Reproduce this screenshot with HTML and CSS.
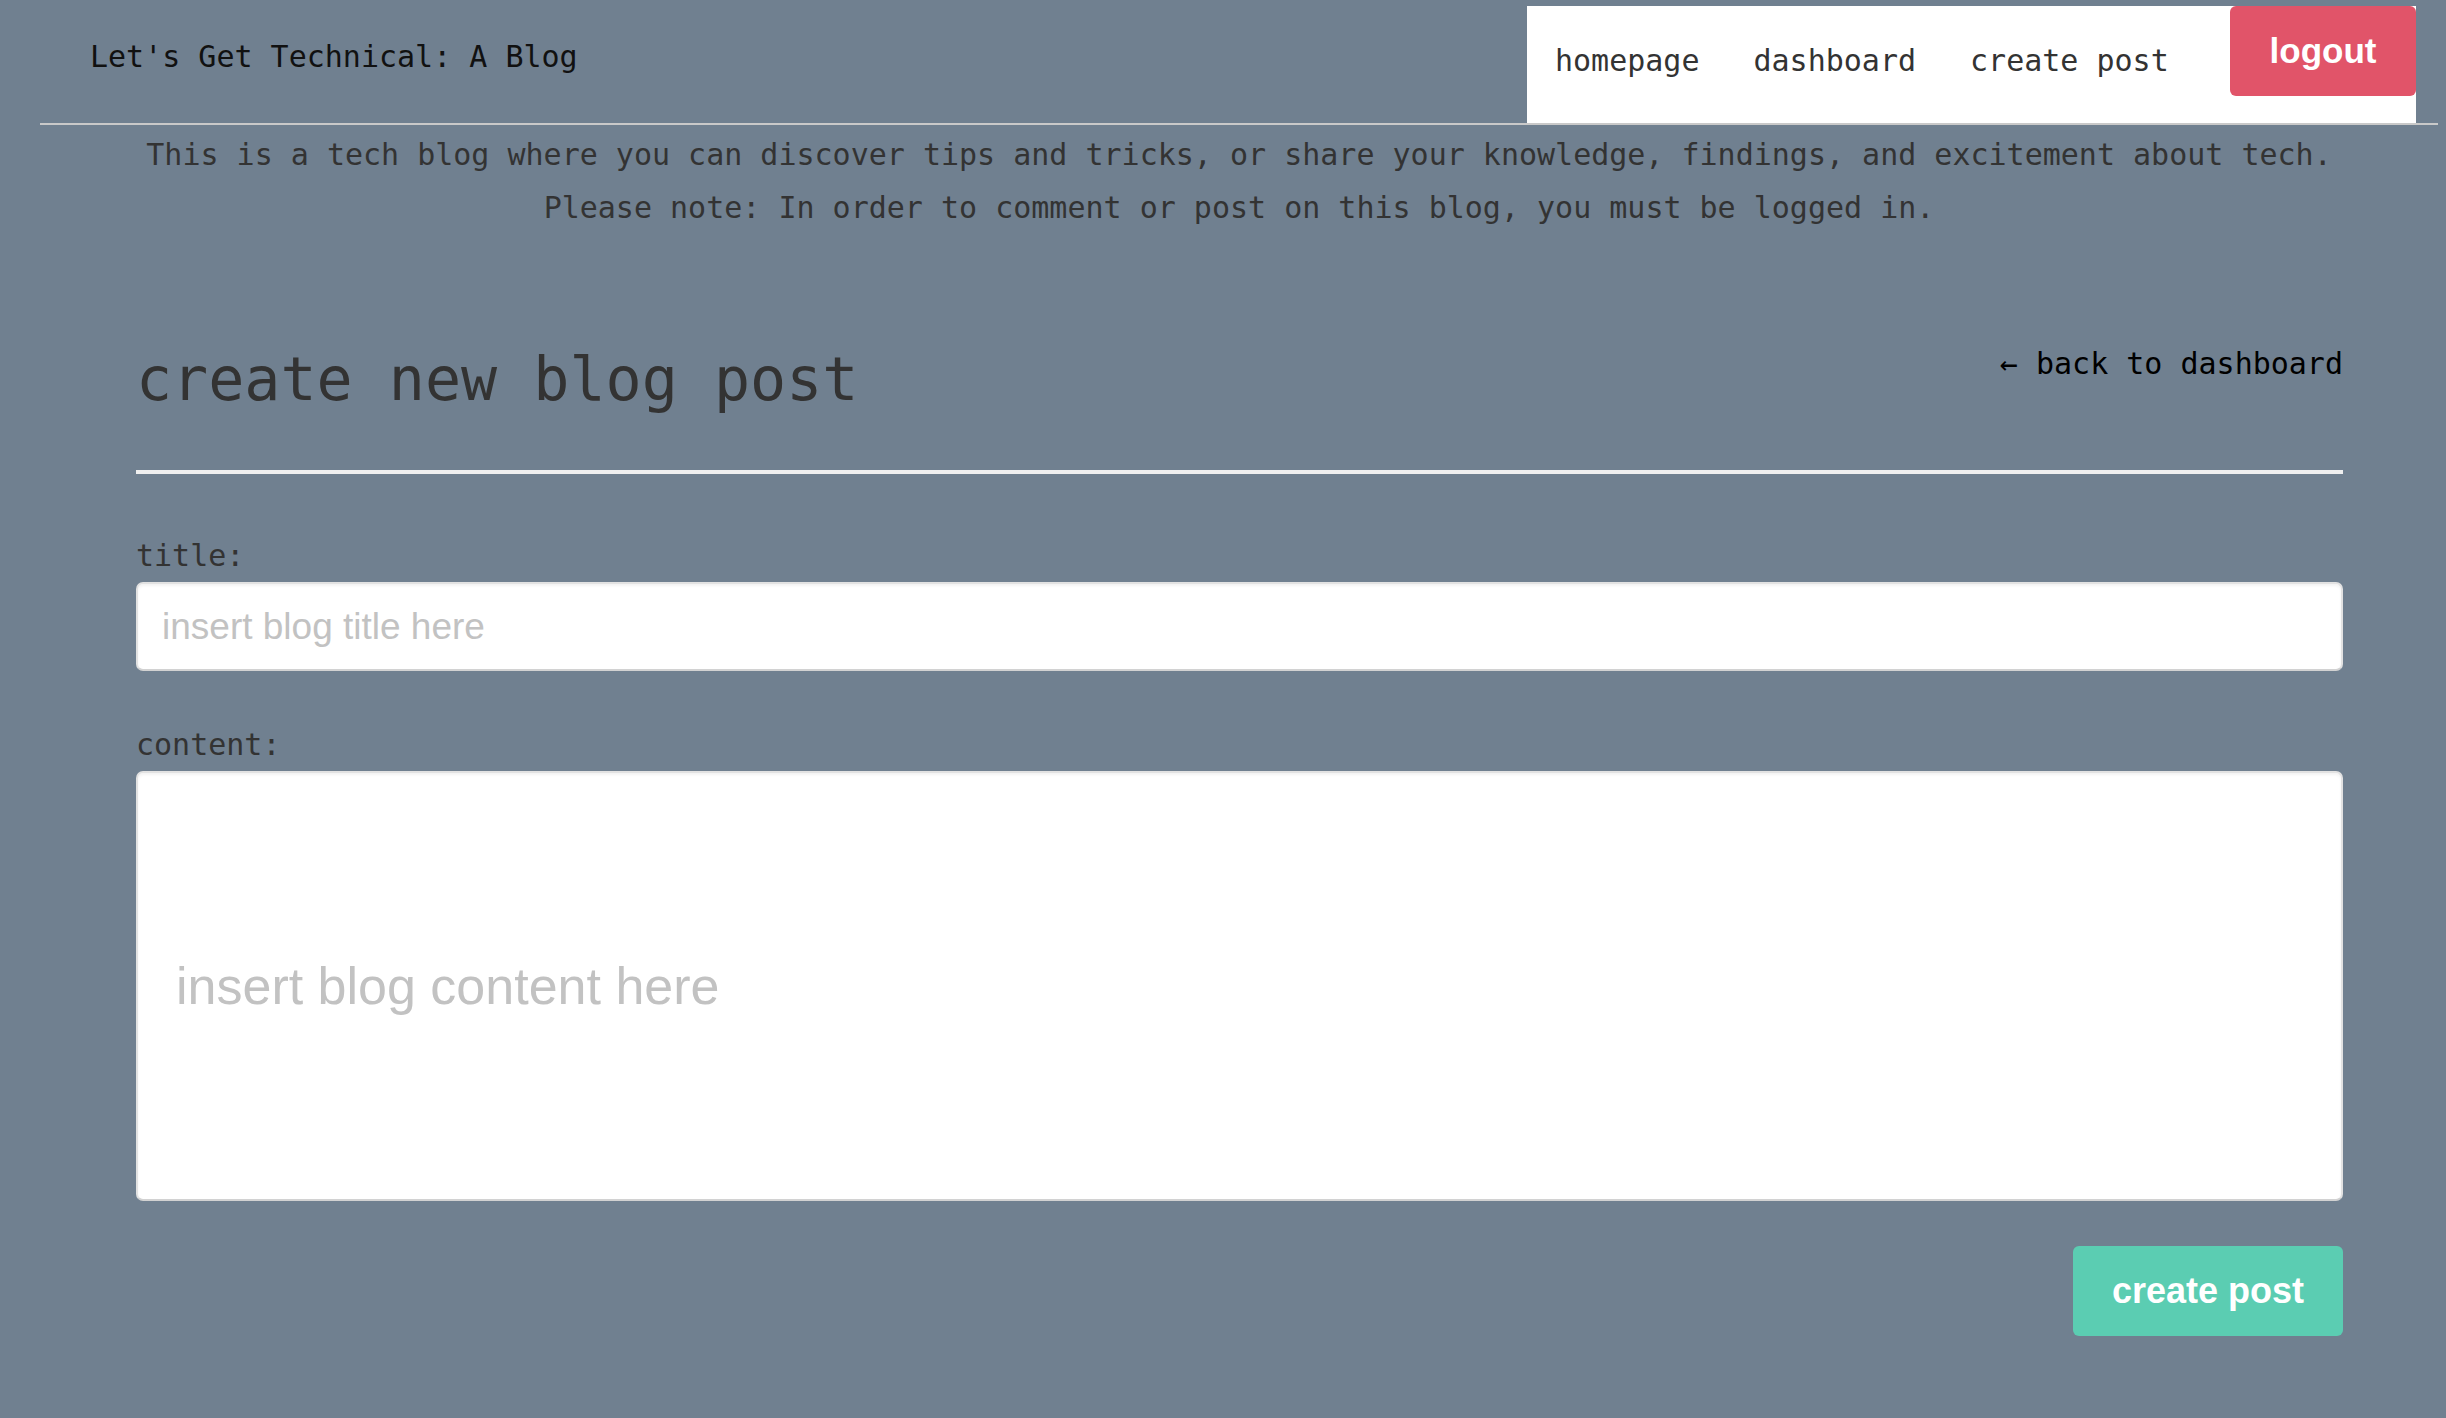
FILE: index.html
```html
<!DOCTYPE html>
<html lang="en">
<head>
<meta charset="utf-8">
<title>Let's Get Technical: A Blog</title>
<link rel="stylesheet" href="styles.css">
</head>
<body>
<header class="site-header">
  <h1 class="brand">Let's Get Technical: A Blog</h1>
  <nav class="nav">
    <a class="nav-link" href="#">homepage</a>
    <a class="nav-link" href="#">dashboard</a>
    <a class="nav-link" href="#">create post</a>
    <button class="logout" type="button">logout</button>
  </nav>
</header>
<section class="intro">
  <p>This is a tech blog where you can discover tips and tricks, or share your knowledge, findings, and excitement about tech.</p>
  <p>Please note: In order to comment or post on this blog, you must be logged in.</p>
</section>
<main class="editor">
  <div class="editor-head">
    <h2 class="editor-title">create new blog post</h2>
    <a class="back" href="#">← back to dashboard</a>
  </div>
  <form class="post-form">
    <label class="field-label" for="title">title:</label>
    <input class="field title-input" id="title" type="text" placeholder="insert blog title here">
    <label class="field-label content-label" for="content">content:</label>
    <input class="field content-input" id="content" type="text" placeholder="insert blog content here">
    <div class="actions">
      <button class="submit" type="submit">create post</button>
    </div>
  </form>
</main>
</body>
</html>
```

FILE: styles.css
```css
html, body {
  margin: 0;
  padding: 0;
}

body {
  background: #708090;
  font-family: "DejaVu Sans Mono", "Liberation Mono", monospace;
  font-size: 30px;
  line-height: 36px;
  color: #333;
}

.site-header {
  display: flex;
  justify-content: space-between;
  align-items: flex-start;
  margin: 0 8px 0 40px;
  padding-top: 6px;
  border-bottom: 2px solid #c9c9c9;
}

.brand {
  margin: 0;
  padding: 33px 0 0 50px;
  font-size: 30px;
  line-height: 36px;
  font-weight: normal;
  color: #111;
}

.nav {
  display: flex;
  align-items: flex-start;
  box-sizing: border-box;
  width: 889px;
  height: 117px;
  margin-right: 22px;
  padding-left: 28px;
  background: #fff;
}

.nav-link {
  margin-top: 37px;
  margin-right: 54px;
  color: #333;
  text-decoration: none;
  font-size: 30px;
  line-height: 36px;
}

.nav-link:nth-child(3) {
  margin-right: 0;
}

.logout {
  margin-left: auto;
  width: 186px;
  height: 90px;
  border: none;
  border-radius: 6px;
  background: #e15469;
  color: #fff;
  font-family: "Liberation Sans", Arial, sans-serif;
  font-weight: bold;
  font-size: 35px;
  padding: 0;
}

.intro {
  margin: 0 8px 0 40px;
  padding-top: 3px;
  text-align: center;
  color: #333;
  line-height: 53px;
}

.intro p {
  margin: 0;
}

.editor {
  margin: 0 103px 0 136px;
}

.editor-head {
  display: flex;
  justify-content: space-between;
  align-items: flex-start;
  margin-top: 109px;
  padding-bottom: 55px;
  border-bottom: 4px solid #efefef;
}

.editor-title {
  margin: 0;
  font-size: 60px;
  line-height: 72px;
  font-weight: normal;
  color: #333;
}

.back {
  margin-top: 3px;
  color: #000;
  text-decoration: none;
}

.post-form {
  display: flex;
  flex-direction: column;
}

.field-label {
  display: block;
  margin-top: 64px;
  margin-bottom: 8px;
  color: #333;
}

.content-label {
  margin-top: 56px;
}

.field {
  display: block;
  box-sizing: border-box;
  width: 100%;
  margin: 0;
  border: 2px solid #e2e2e2;
  border-bottom-color: #d2d2d2;
  border-radius: 7px;
  background: #fff;
  box-shadow: inset 0 2px 3px rgba(0, 0, 0, 0.05);
  font-family: "Liberation Sans", Arial, sans-serif;
  color: #333;
  outline: none;
}

.title-input {
  height: 89px;
  padding: 0 24px;
  font-size: 37px;
}

.content-input {
  height: 430px;
  padding: 0 38px;
  font-size: 52px;
}

.field::placeholder {
  color: #c2c2c2;
  opacity: 1;
}

.actions {
  display: flex;
  justify-content: flex-end;
  margin-top: 45px;
}

.submit {
  width: 270px;
  height: 90px;
  border: none;
  border-radius: 6px;
  background: #5bcdb2;
  color: #fff;
  font-family: "Liberation Sans", Arial, sans-serif;
  font-weight: bold;
  font-size: 36px;
  padding: 0;
}
```
